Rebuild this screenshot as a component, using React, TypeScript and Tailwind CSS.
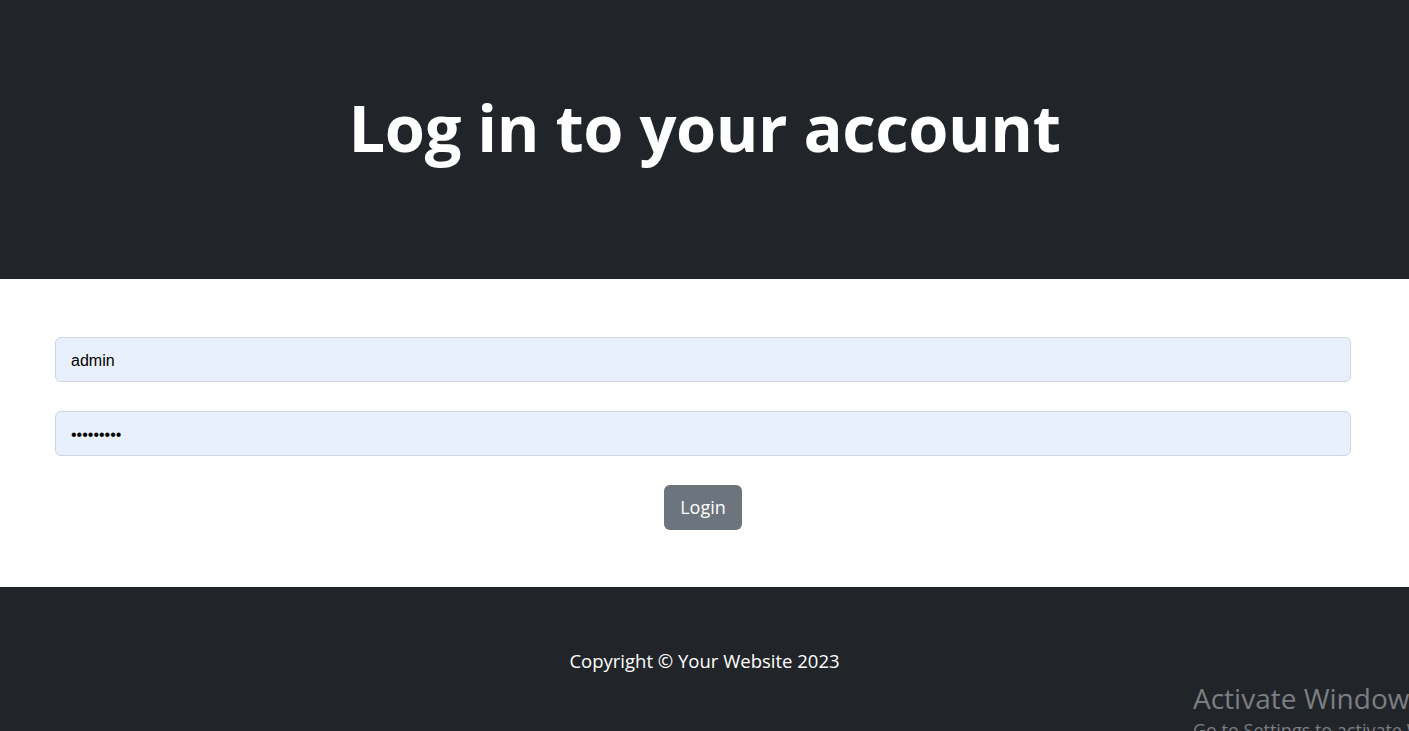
import React from 'react';

export default function App() {
  return (
    <div className="relative min-h-screen overflow-hidden bg-white font-['Open_Sans',sans-serif]">
      {/* Header */}
      <header className="flex h-[279px] items-center justify-center bg-[#212529]">
        <h1 className="pb-[24px] text-[65px] font-bold leading-none tracking-[-0.45px] text-white">
          Log in to your account
        </h1>
      </header>

      {/* Form */}
      <main className="h-[308px] pl-[55px] pr-[58px] pt-[58px]">
        <form className="flex flex-col gap-[29px]" onSubmit={(e) => e.preventDefault()}>
          <input
            type="text"
            defaultValue="admin"
            className="h-[45px] w-full rounded-[6px] border border-[#ced4da] bg-[#e8f0fe] px-[15px] pt-[3px] font-['Liberation_Sans',sans-serif] text-[16px] text-black outline-none"
          />
          <input
            type="password"
            defaultValue="password1"
            className="h-[45px] w-full rounded-[6px] border border-[#ced4da] bg-[#e8f0fe] px-[15px] pt-[2px] font-['Liberation_Sans',sans-serif] text-[16px] text-black outline-none"
          />
          <div className="flex justify-center">
            <button
              type="submit"
              className="h-[45px] w-[78px] rounded-[6px] bg-[#6c757d] text-[18px] text-white"
            >
              Login
            </button>
          </div>
        </form>
      </main>

      {/* Footer */}
      <footer className="flex h-[144px] items-start justify-center bg-[#212529] pt-[61px]">
        <p className="text-[18.5px] leading-[26px] text-white">Copyright © Your Website 2023</p>
      </footer>

      {/* OS watermark */}
      <div className="pointer-events-none absolute left-[1193px] top-[678px] whitespace-nowrap text-[#7b7e82]">
        <p className="text-[28px] leading-[40px]">Activate Windows</p>
        <p className="text-[18px] leading-[24px]">Go to Settings to activate Windows.</p>
      </div>
    </div>
  );
}
